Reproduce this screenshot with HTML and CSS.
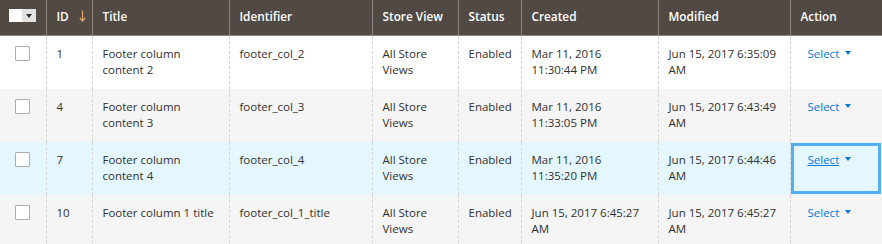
FILE: index.html
```html
<!DOCTYPE html>
<html lang="en">
<head>
  <meta charset="UTF-8">
  <meta name="viewport" content="width=device-width, initial-scale=1.0">
  <title>CMS Blocks Grid</title>
  <link rel="stylesheet" href="styles.css">
</head>
<body>
  <table class="data-grid">
    <colgroup>
      <col style="width: 46px">
      <col style="width: 46px">
      <col style="width: 137px">
      <col style="width: 143px">
      <col style="width: 86px">
      <col style="width: 63px">
      <col style="width: 137px">
      <col style="width: 132px">
      <col style="width: 92px">
    </colgroup>
    <thead>
      <tr>
        <th class="col-select">
          <div class="multiselect">
            <span class="ms-box"></span>
            <span class="ms-toggle"></span>
          </div>
        </th>
        <th>ID
          <svg class="sort-arrow" width="7" height="12" viewBox="0 0 7 12">
            <path d="M3.5 0.5 V11 M0.8 8 L3.5 11 L6.2 8" fill="none" stroke="#e0a56b" stroke-width="1.2"/>
          </svg>
        </th>
        <th>Title</th>
        <th>Identifier</th>
        <th>Store View</th>
        <th>Status</th>
        <th>Created</th>
        <th>Modified</th>
        <th>Action</th>
      </tr>
    </thead>
    <tbody>
      <tr>
        <td class="col-select"><span class="checkbox"></span></td>
        <td>1</td>
        <td>Footer column content 2</td>
        <td>footer_col_2</td>
        <td>All Store Views</td>
        <td>Enabled</td>
        <td>Mar 11, 2016 11:30:44 PM</td>
        <td>Jun 15, 2017 6:35:09 AM</td>
        <td><a class="action-select" href="#">Select</a></td>
      </tr>
      <tr class="even">
        <td class="col-select"><span class="checkbox"></span></td>
        <td>4</td>
        <td>Footer column content 3</td>
        <td>footer_col_3</td>
        <td>All Store Views</td>
        <td>Enabled</td>
        <td>Mar 11, 2016 11:33:05 PM</td>
        <td>Jun 15, 2017 6:43:49 AM</td>
        <td><a class="action-select" href="#">Select</a></td>
      </tr>
      <tr class="active">
        <td class="col-select"><span class="checkbox"></span></td>
        <td>7</td>
        <td>Footer column content 4</td>
        <td>footer_col_4</td>
        <td>All Store Views</td>
        <td>Enabled</td>
        <td>Mar 11, 2016 11:35:20 PM</td>
        <td>Jun 15, 2017 6:44:46 AM</td>
        <td class="focused"><a class="action-select" href="#">Select</a></td>
      </tr>
      <tr class="even">
        <td class="col-select"><span class="checkbox"></span></td>
        <td>10</td>
        <td>Footer column 1 title</td>
        <td>footer_col_1_title</td>
        <td>All Store Views</td>
        <td>Enabled</td>
        <td>Jun 15, 2017 6:45:27 AM</td>
        <td>Jun 15, 2017 6:45:27 AM</td>
        <td><a class="action-select" href="#">Select</a></td>
      </tr>
    </tbody>
  </table>
</body>
</html>
```

FILE: styles.css
```css
/* Page */
body {
  margin: 0;
  font-family: "Open Sans", "DejaVu Sans", sans-serif;
  font-size: 11.5px;
  color: #303030;
  background: #fff;
}

/* Grid table */
.data-grid {
  width: 882px;
  border-collapse: collapse;
  table-layout: fixed;
}

.data-grid th {
  height: 35px;
  padding: 0 10px 3px;
  background: #514943;
  color: #fff;
  font-size: 11.8px;
  font-weight: 600;
  text-align: left;
  line-height: 16px;
  border-left: 1px solid #8a837f;
  border-bottom: 1px solid #8a837f;
  box-sizing: border-box;
  white-space: nowrap;
}

.data-grid td {
  padding: 10px 10px;
  line-height: 16.5px;
  vertical-align: top;
  border-left: 1px dashed #d6d6d6;
}

.data-grid th.col-select,
.data-grid td.col-select {
  border-left: none;
  padding-left: 15px;
}

.data-grid th.col-select {
  padding-left: 9px;
}

/* Row backgrounds */
.data-grid tbody tr {
  background: #fff;
}

.data-grid tbody tr.even {
  background: #f5f5f5;
}

.data-grid tbody tr.active {
  background: #e5f7fe;
}

.data-grid td.focused {
  outline: 3px solid #55adf4;
  outline-offset: -4px;
}

/* Header multiselect */
.multiselect {
  display: flex;
  width: 27px;
  height: 13px;
}

.ms-box {
  width: 13px;
  background: #fff;
}

.ms-toggle {
  position: relative;
  width: 14px;
  background: #e3e3e3;
}

.ms-toggle::after {
  content: "";
  position: absolute;
  left: 4px;
  top: 5px;
  border-top: 4px solid #303030;
  border-left: 3px solid transparent;
  border-right: 3px solid transparent;
}

/* Sort indicator */
.sort-arrow {
  margin-left: 7px;
  vertical-align: -1px;
}

/* Row checkbox */
.checkbox {
  display: block;
  width: 13px;
  height: 13px;
  border: 1px solid #adadad;
  border-radius: 1px;
  background: #fff;
}

/* Action link */
.action-select {
  color: #007bdb;
  text-decoration: none;
  padding-left: 7px;
}

.action-select::after {
  content: "";
  display: inline-block;
  margin-left: 6px;
  vertical-align: 3px;
  border-top: 4px solid #007bdb;
  border-left: 3px solid transparent;
  border-right: 3px solid transparent;
}

.focused .action-select {
  text-decoration: underline;
}
```
